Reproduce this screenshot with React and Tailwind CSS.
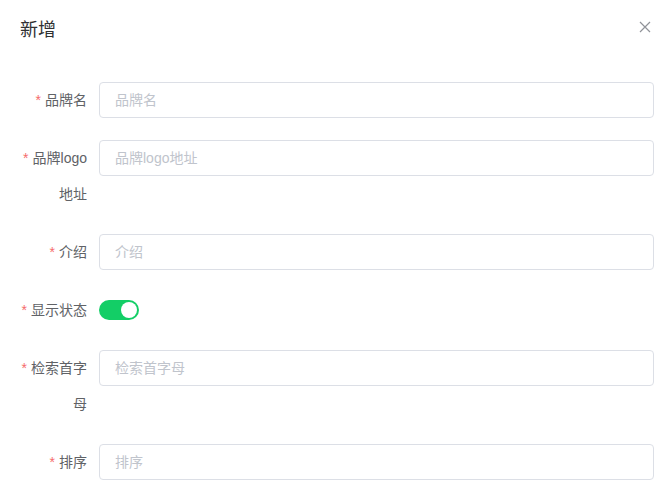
import React, { useState } from "react";

const fields = [
  { label: "品牌名", placeholder: "品牌名" },
  { label: "品牌logo地址", placeholder: "品牌logo地址" },
  { label: "介绍", placeholder: "介绍" },
  { label: "显示状态", type: "switch" },
  { label: "检索首字母", placeholder: "检索首字母" },
  { label: "排序", placeholder: "排序" },
];

const FormItem = ({ item, on, setOn }) => (
  <div className="flex mb-[22px]">
    <label className="w-[80px] shrink-0 pr-[12px] text-right text-[14px] leading-[36px] text-[#606266]">
      <span className="text-[#F56C6C] mr-[4px]">*</span>
      {item.label}
    </label>
    <div className="flex-1 leading-[36px]">
      {item.type === "switch" ? (
        <div className="h-[36px] flex items-center">
          <button
            type="button"
            onClick={() => setOn(!on)}
            className={`relative w-[40px] h-[20px] rounded-full ${on ? "bg-[#13ce66]" : "bg-[#dcdfe6]"}`}
          >
            <span
              className={`absolute top-[2px] w-[16px] h-[16px] rounded-full bg-white ${on ? "left-[22px]" : "left-[2px]"}`}
            />
          </button>
        </div>
      ) : (
        <input
          type="text"
          placeholder={item.placeholder}
          className="w-full h-[36px] px-[15px] border border-[#DCDFE6] rounded-[4px] text-[14px] text-[#606266] placeholder:text-[#C0C4CC] outline-none"
        />
      )}
    </div>
  </div>
);

const App = () => {
  const [on, setOn] = useState(true);

  return (
    <div
      className="w-[672px] min-h-[494px] bg-white"
      style={{ fontFamily: '"Liberation Sans", "Noto Sans CJK SC", sans-serif' }}
    >
      {/* header */}
      <div className="relative pt-[18px] pb-[10px] px-[20px]">
        <span className="text-[18px] leading-[24px] text-[#303133]">新增</span>
        <button type="button" className="absolute top-[21px] right-[21px] w-[12px] h-[12px]">
          <svg width="12" height="12" viewBox="0 0 12 12">
            <path d="M1 1L11 11M11 1L1 11" stroke="#909399" strokeWidth="1.2" fill="none" />
          </svg>
        </button>
      </div>

      {/* body */}
      <form className="pt-[29px] pl-[19px] pr-[18px]">
        {fields.map((item) => (
          <FormItem key={item.label} item={item} on={on} setOn={setOn} />
        ))}
      </form>
    </div>
  );
};

export default App;
